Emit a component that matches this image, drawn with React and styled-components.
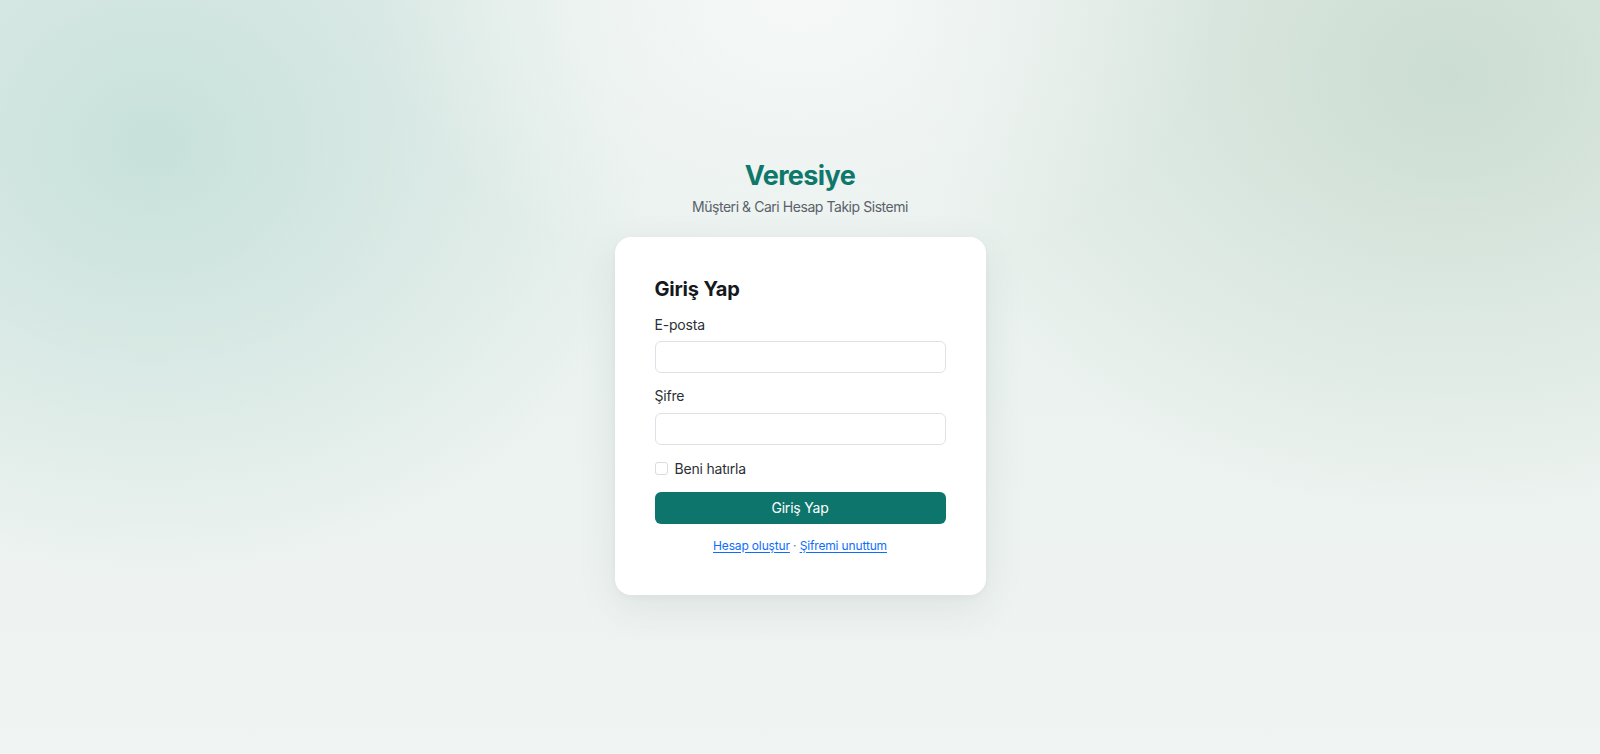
import React from "react";
import styled, { createGlobalStyle } from "styled-components";

const Global = createGlobalStyle`
  html, body { margin: 0; padding: 0; }
  body {
    font-family: Inter, "Noto Sans", "Liberation Sans", sans-serif;
    color: #212529;
  }
  * { box-sizing: border-box; }
`;

const Page = styled.div`
  min-height: 754px;
  height: 100vh;
  display: flex;
  flex-direction: column;
  align-items: center;
  justify-content: center;
  background:
    radial-gradient(ellipse 420px 300px at 50% 0%, rgba(248, 250, 249, 0.85), rgba(248, 250, 249, 0) 100%),
    radial-gradient(ellipse 500px 440px at 153px 145px, rgba(198, 224, 218, 0.95), rgba(198, 224, 218, 0) 100%),
    radial-gradient(ellipse 540px 440px at 1450px 75px, rgba(202, 220, 209, 0.95), rgba(202, 220, 209, 0) 100%),
    linear-gradient(180deg, #e7efec 0%, #ebf2ef 50%, #f0f4f2 100%);
`;

const Brand = styled.header`
  display: flex;
  flex-direction: column;
  align-items: center;
  margin-bottom: 20px;
`;

const Title = styled.h1`
  margin: 0 0 3px;
  font-size: 27px;
  line-height: 1.25;
  font-weight: 700;
  color: #0e786b;
  letter-spacing: -0.6px;
`;

const Subtitle = styled.p`
  margin: 0;
  font-size: 14px;
  line-height: 1.5;
  color: #5a6169;
  letter-spacing: -0.45px;
`;

const Card = styled.form`
  width: 371px;
  padding: 40px 40px 40px;
  background: #ffffff;
  border-radius: 16px;
  box-shadow: 0 12px 40px rgba(40, 70, 60, 0.09), 0 2px 6px rgba(40, 70, 60, 0.04);
  display: flex;
  flex-direction: column;
`;

const Heading = styled.h2`
  margin: 0 0 13px;
  font-size: 20px;
  line-height: 1.2;
  font-weight: 700;
  color: #15191d;
  letter-spacing: -0.2px;
`;

const Field = styled.div`
  display: flex;
  flex-direction: column;
  margin-bottom: ${(p) => p.$mb ?? 12}px;
`;

const Label = styled.label`
  font-size: 14px;
  line-height: 1.5;
  color: #2b3035;
  margin-bottom: ${(p) => p.$mb ?? 6}px;
  letter-spacing: -0.2px;
`;

const Input = styled.input`
  height: 32px;
  width: 100%;
  border: 1px solid #dee2e6;
  border-radius: 6px;
  background: #fff;
  padding: 4px 10px;
  font: inherit;
  font-size: 14px;
  outline: none;
`;

const CheckRow = styled.label`
  display: flex;
  align-items: center;
  gap: 7px;
  font-size: 14px;
  line-height: 1.5;
  color: #2b3035;
  margin: 13px 0 13px;
  letter-spacing: -0.2px;
`;

const Box = styled.span`
  width: 13px;
  height: 13px;
  border: 1px solid #d7dce1;
  border-radius: 3px;
  background: #fff;
  flex: none;
`;

const Button = styled.button`
  height: 32px;
  width: 100%;
  border: none;
  border-radius: 6px;
  background: #0e756c;
  color: #ffffff;
  font: inherit;
  font-size: 14px;
  letter-spacing: -0.2px;
  cursor: pointer;
`;

const Links = styled.div`
  margin-top: 13px;
  text-align: center;
  font-size: 12px;
  line-height: 1.5;
  color: #6c757d;
  letter-spacing: -0.15px;
`;

const Link = styled.a`
  color: #0d6efd;
  text-decoration: underline;
  text-underline-offset: 2px;
`;

export default function App() {
  return (
    <>
      <Global />
      <Page>
        <Brand>
          <Title>Veresiye</Title>
          <Subtitle>Müşteri &amp; Cari Hesap Takip Sistemi</Subtitle>
        </Brand>
        <Card onSubmit={(e) => e.preventDefault()}>
          <Heading>Giriş Yap</Heading>
          <Field $mb={12}>
            <Label>E-posta</Label>
            <Input type="email" />
          </Field>
          <Field $mb={0}>
            <Label $mb={7}>Şifre</Label>
            <Input type="password" />
          </Field>
          <CheckRow>
            <Box />
            Beni hatırla
          </CheckRow>
          <Button type="submit">Giriş Yap</Button>
          <Links>
            <Link href="#">Hesap oluştur</Link> · <Link href="#">Şifremi unuttum</Link>
          </Links>
        </Card>
      </Page>
    </>
  );
}
